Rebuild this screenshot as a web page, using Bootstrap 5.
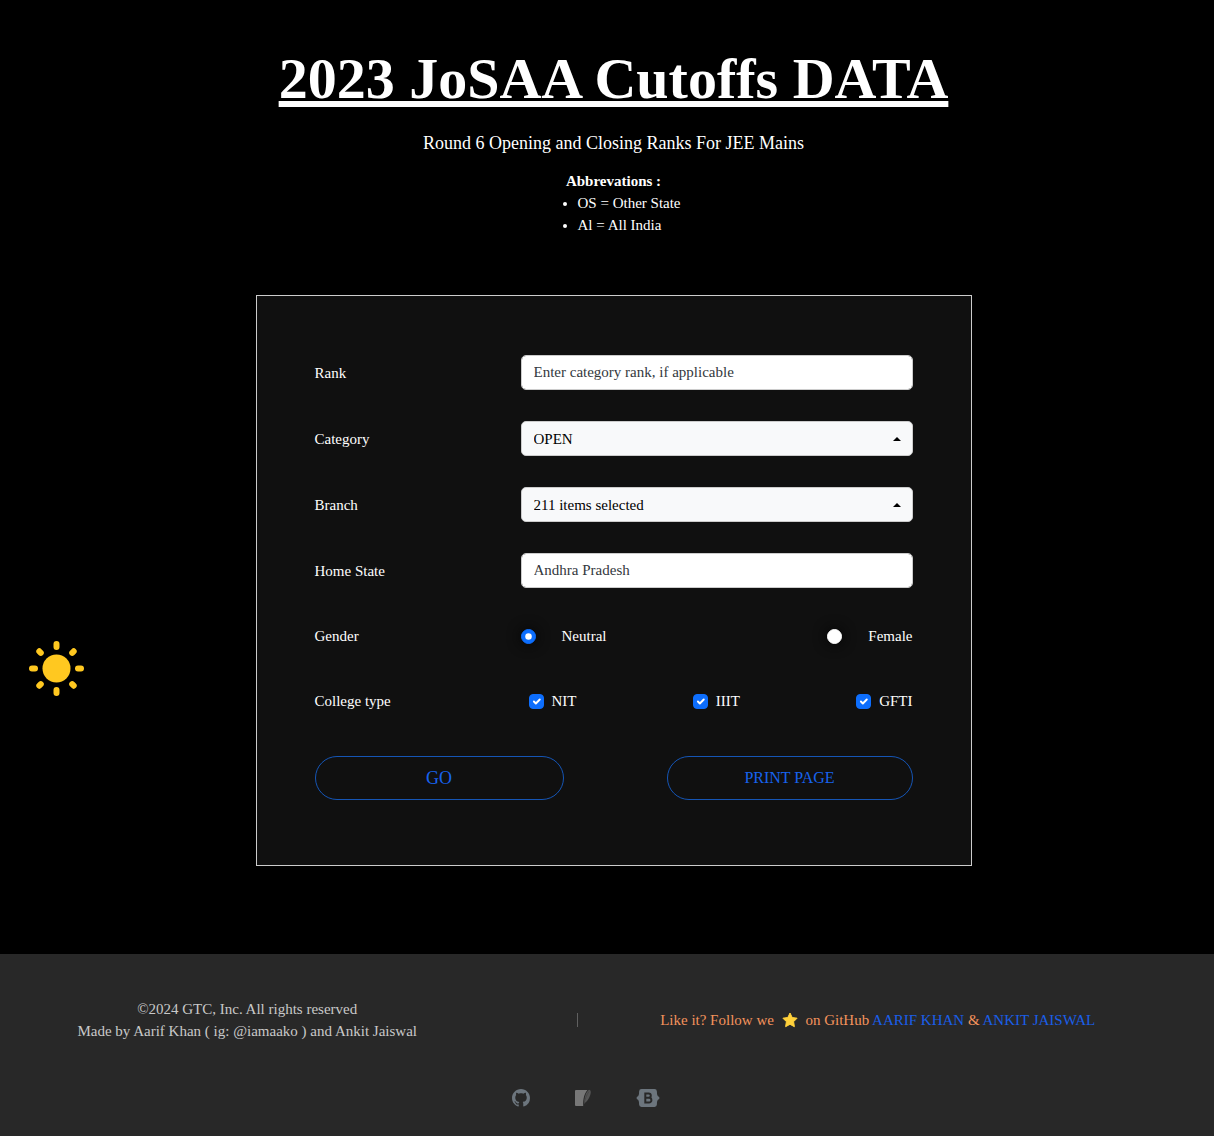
<!DOCTYPE html>
<html lang="en">
<head>
<meta charset="utf-8">
<meta name="viewport" content="width=device-width, initial-scale=1">
<title>2023 JoSAA Cutoffs DATA</title>
<link rel="stylesheet" href="https://cdn.jsdelivr.net/npm/bootstrap@5.3.0/dist/css/bootstrap.min.css">
<style>
  body { font-family: "Liberation Serif", "Times New Roman", serif; font-size: 15px; line-height: 22px; background: #000; color: #fff; }
  main { padding: 44px 0 88px 13px; }
  .page-title { font-size: 58px; line-height: 69px; font-weight: 700; text-decoration: underline; text-decoration-thickness: 6px; margin-bottom: 19px; }
  .subtitle { font-size: 18px; margin-bottom: 16px; }
  .abbr-list { width: 101px; padding: 0; margin: 0 auto 59px; }
  .abbr-wrap { padding-left: 29px; }
  .form-panel { max-width: 716px; background: #101010; border: 1px solid #ccc; padding: 59px 58px 65px; }
  .form-rows { display: grid; gap: 31px; }
  .form-line { display: grid; grid-template-columns: 206px 1fr; align-items: center; min-height: 34px; }
  .field-box { height: 35px; font-size: 15px; line-height: 22px; padding: 5px 12px; border-radius: 5px; border-color: #ccc; color: #212529; background-color: #fff; }
  .field-box::placeholder { color: #33383d; }
  .caret-up { background-color: #f8f9fa; background-size: 8px 4px; background-position: right 11px center; color: #000;
    background-image: url("data:image/svg+xml,%3csvg xmlns='http://www.w3.org/2000/svg' viewBox='0 0 8 4'%3e%3cpath d='M0 4L4 0L8 4z'/%3e%3c/svg%3e"); }
  .pick { width: 15px; height: 15px; margin: 0; flex: none; background-color: #fff; border-color: #fff; }
  .pick:checked { background-color: #0d6efd; border-color: #0d6efd; }
  .pick[type=checkbox] { border-radius: 4px; }
  .pick[type=radio] { box-shadow: 0 0 12px 2px #080808; }
  .radio-gap { gap: 26px; }
  .actions { margin-top: 38px; }
  .btn-pill { height: 44px; border-radius: 22px; padding: 0; --bs-btn-color: #1763ee; --bs-btn-border-color: #1555b5; }
  .btn-go { width: 249px; font-size: 18px; }
  .btn-print { width: 246px; font-size: 16px; }
  .theme-toggle { left: 29px; top: 641px; width: 55px; height: 55px; }
  .site-footer { background: #282828; color: #c8c8c8; padding: 44px 0 28px; }
  .footer-cols { display: grid; grid-template-columns: 495fr 166fr 434fr 119fr; align-items: center; }
  .divider { width: 1px; height: 14px; background: #606060; }
  .follow { color: #f4935c; }
  .follow a { color: #1a5fe8; text-decoration: none; }
  .tool-links { gap: 44px; margin-top: 46px; padding-right: 42px; }
</style>
<script src="https://cdn.jsdelivr.net/npm/bootstrap@5.3.0/dist/js/bootstrap.bundle.min.js"></script>
</head>
<body>
<button class="theme-toggle btn p-0 border-0 position-fixed" type="button" aria-label="Toggle theme">
  <svg class="d-block" width="55" height="55" viewBox="-27.5 -27.5 55 55" fill="#ffc820" stroke="#ffc820" stroke-width="6" stroke-linecap="round">
    <circle r="14" stroke="none"/>
    <path d="M0-24.500v3M0 24.500v-3M-24.500 0h3M24.500 0h-3M-17.200-17.200l1.500 1.500M17.200-17.200l-1.500 1.500M-17.200 17.200l1.500-1.500M17.200 17.200l-1.500-1.500"/>
  </svg>
</button>

<main>
  <header class="text-center">
    <h1 class="page-title">2023 JoSAA Cutoffs DATA</h1>
    <p class="subtitle">Round 6 Opening and Closing Ranks For JEE Mains</p>
    <strong class="d-block">Abbrevations :</strong>
    <div class="abbr-wrap">
      <ul class="abbr-list text-start text-nowrap">
        <li>OS = Other State</li>
        <li>Al = All India</li>
      </ul>
    </div>
  </header>

  <form class="form-panel mx-auto">
    <div class="form-rows">
      <div class="form-line">
        <label for="rank">Rank</label>
        <input id="rank" type="text" class="form-control field-box" placeholder="Enter category rank, if applicable">
      </div>
      <div class="form-line">
        <label for="category">Category</label>
        <select id="category" class="form-select field-box caret-up"><option>OPEN</option></select>
      </div>
      <div class="form-line">
        <label for="branch">Branch</label>
        <select id="branch" class="form-select field-box caret-up"><option>211 items selected</option></select>
      </div>
      <div class="form-line">
        <label for="state">Home State</label>
        <input id="state" type="text" class="form-control field-box" placeholder="Andhra Pradesh">
      </div>
      <div class="form-line" role="radiogroup" aria-labelledby="gender-label">
        <span id="gender-label">Gender</span>
        <div class="d-flex justify-content-between">
          <div class="d-flex align-items-center radio-gap">
            <input class="form-check-input pick" type="radio" name="gender" id="neutral" checked>
            <label for="neutral">Neutral</label>
          </div>
          <div class="d-flex align-items-center radio-gap">
            <input class="form-check-input pick" type="radio" name="gender" id="female">
            <label for="female">Female</label>
          </div>
        </div>
      </div>
      <div class="form-line" role="group" aria-labelledby="type-label">
        <span id="type-label">College type</span>
        <div class="d-flex justify-content-between ps-2">
          <div class="d-flex align-items-center gap-2">
            <input class="form-check-input pick" type="checkbox" id="nit" checked>
            <label for="nit">NIT</label>
          </div>
          <div class="d-flex align-items-center gap-2">
            <input class="form-check-input pick" type="checkbox" id="iiit" checked>
            <label for="iiit">IIIT</label>
          </div>
          <div class="d-flex align-items-center gap-2">
            <input class="form-check-input pick" type="checkbox" id="gfti" checked>
            <label for="gfti">GFTI</label>
          </div>
        </div>
      </div>
    </div>
    <div class="actions d-flex justify-content-between">
      <button type="button" class="btn btn-outline-primary btn-pill btn-go">GO</button>
      <button type="button" class="btn btn-outline-primary btn-pill btn-print">PRINT PAGE</button>
    </div>
  </form>
</main>

<footer class="site-footer">
  <div class="footer-cols text-nowrap text-center">
    <div>©2024 GTC, Inc. All rights reserved<br>Made by Aarif Khan ( ig: @iamaako ) and Ankit Jaiswal</div>
    <div class="divider mx-auto"></div>
    <div class="follow">Like it? Follow we
      <svg class="mx-1 align-text-bottom" width="16" height="16" viewBox="0 0 16 16" role="img" aria-label="star"><path fill="#ffd13b" stroke="#ffd13b" stroke-width="1" stroke-linejoin="round" d="M8 1l2.200 4.500 4.900.7-3.500 3.500.8 5L8 12.300 3.600 14.700l.8-5L.9 6.200l4.900-.7z"/></svg>
      on GitHub <a href="#">AARIF KHAN</a> &amp; <a href="#">ANKIT JAISWAL</a></div>
  </div>
  <div class="tool-links d-flex justify-content-center align-items-center">
    <a href="#" aria-label="GitHub"><svg class="d-block" width="18" height="18" viewBox="0 0 16 16" fill="#6c757d"><path d="M8 0C3.580 0 0 3.580 0 8c0 3.540 2.290 6.530 5.470 7.590.4.070.55-.17.55-.38 0-.19-.010-.82-.010-1.490-2.010.37-2.530-.49-2.690-.94-.090-.23-.48-.94-.82-1.130-.28-.15-.68-.52-.010-.53.63-.010 1.080.58 1.230.82.72 1.210 1.870.87 2.330.66.070-.52.28-.87.51-1.070-1.780-.2-3.640-.89-3.640-3.950 0-.87.31-1.590.82-2.150-.080-.2-.36-1.020.080-2.120 0 0 .67-.21 2.200.82.64-.18 1.320-.27 2-.27s1.360.090 2 .27c1.530-1.040 2.200-.82 2.200-.82.44 1.100.16 1.920.080 2.120.51.56.82 1.270.82 2.150 0 3.070-1.870 3.750-3.650 3.950.29.25.54.73.54 1.480 0 1.070-.010 1.930-.010 2.200 0 .21.15.46.55.38A8.010 8.010 0 0 0 16 8c0-4.420-3.580-8-8-8z"/></svg></a>
    <a href="#" aria-label="SQLite"><svg class="d-block" width="18" height="18" viewBox="0 0 18 18"><path fill="#777" d="M2 1h11.500C10 5 9 10 9.200 17H2q-1 0-1-1V2q0-1 1-1z"/><path fill="#555" d="M15 .8c2 .3 2.300 2.700.9 6.200-1.200 3-3 5.500-5.800 7.500C10.300 8 12 3 15 .8z"/><path fill="none" stroke="#404040" stroke-width=".7" d="M15 2.500C12.500 6 11 10 10.200 15"/></svg></a>
    <a href="#" aria-label="Bootstrap"><svg class="d-block" width="24" height="20" viewBox="0 0 24 20"><path fill="#6c757d" d="M5.500 1h13q2.300 0 2.400 2.400C21 6.500 21 8 23.300 9v2C21 12 21 13.500 20.900 16.600q-.1 2.400-2.400 2.400h-13q-2.300 0-2.400-2.400C3 13.500 3 12 .7 11V9C3 8 3 6.500 3.100 3.400Q3.200 1 5.500 1z"/><path fill="none" stroke="#282828" stroke-width="2" d="M9.300 5.400h3.300a2.200 2.200 0 0 1 0 4.400H9.300zM9.300 9.800h3.700a2.400 2.400 0 0 1 0 4.800H9.300z"/></svg></a>
  </div>
</footer>
</body>
</html>
